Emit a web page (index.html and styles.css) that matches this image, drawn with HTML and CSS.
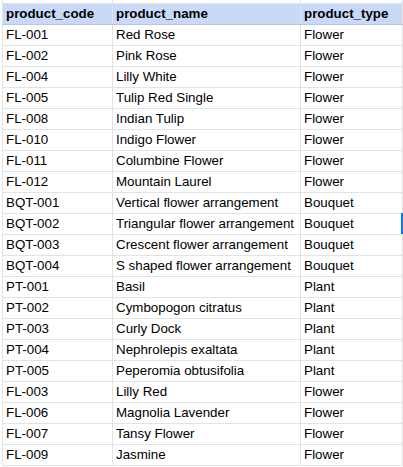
FILE: index.html
```html
<!DOCTYPE html>
<html>
<head>
<meta charset="utf-8">
<link rel="stylesheet" href="styles.css">
</head>
<body>
<div class="sheet">
<table class="grid">
<colgroup><col class="c1"><col class="c2"><col class="c3"><col class="c4"></colgroup>
<tr class="top"><td></td><td></td><td></td><td></td></tr>
<tr class="head"><td>product_code</td><td>product_name</td><td>product_type</td><td class="edge"></td></tr>
<tr><td>FL-001</td><td>Red Rose</td><td>Flower</td><td class="edge"></td></tr>
<tr><td>FL-002</td><td>Pink Rose</td><td>Flower</td><td class="edge"></td></tr>
<tr><td>FL-004</td><td>Lilly White</td><td>Flower</td><td class="edge"></td></tr>
<tr><td>FL-005</td><td>Tulip Red Single</td><td>Flower</td><td class="edge"></td></tr>
<tr><td>FL-008</td><td>Indian Tulip</td><td>Flower</td><td class="edge"></td></tr>
<tr><td>FL-010</td><td>Indigo Flower</td><td>Flower</td><td class="edge"></td></tr>
<tr><td>FL-011</td><td>Columbine Flower</td><td>Flower</td><td class="edge"></td></tr>
<tr><td>FL-012</td><td>Mountain Laurel</td><td>Flower</td><td class="edge"></td></tr>
<tr><td>BQT-001</td><td>Vertical flower arrangement</td><td>Bouquet</td><td class="edge"></td></tr>
<tr><td>BQT-002</td><td>Triangular flower arrangement</td><td>Bouquet</td><td class="edge"></td></tr>
<tr><td>BQT-003</td><td>Crescent flower arrangement</td><td>Bouquet</td><td class="edge"></td></tr>
<tr><td>BQT-004</td><td>S shaped flower arrangement</td><td>Bouquet</td><td class="edge"></td></tr>
<tr><td>PT-001</td><td>Basil</td><td>Plant</td><td class="edge"></td></tr>
<tr><td>PT-002</td><td>Cymbopogon citratus</td><td>Plant</td><td class="edge"></td></tr>
<tr><td>PT-003</td><td>Curly Dock</td><td>Plant</td><td class="edge"></td></tr>
<tr><td>PT-004</td><td>Nephrolepis exaltata</td><td>Plant</td><td class="edge"></td></tr>
<tr><td>PT-005</td><td>Peperomia obtusifolia</td><td>Plant</td><td class="edge"></td></tr>
<tr><td>FL-003</td><td>Lilly Red</td><td>Flower</td><td class="edge"></td></tr>
<tr><td>FL-006</td><td>Magnolia Lavender</td><td>Flower</td><td class="edge"></td></tr>
<tr><td>FL-007</td><td>Tansy Flower</td><td>Flower</td><td class="edge"></td></tr>
<tr><td>FL-009</td><td>Jasmine</td><td>Flower</td><td class="edge"></td></tr>
</table>
<div class="selection"></div>
</div>
</body>
</html>
```

FILE: styles.css
```css
html, body {
  margin: 0;
  padding: 0;
  background: #ffffff;
  overflow: hidden;
}
.sheet {
  padding-left: 2px;
  position: relative;
}
.grid {
  border-collapse: collapse;
  table-layout: fixed;
  width: 402px;
  font-family: "Liberation Sans", Arial, sans-serif;
  font-size: 13.33px;
  color: #000000;
}
.c1 { width: 110px; }
.c2 { width: 188px; }
.c3 { width: 102px; }
.c4 { width: 2px; }
.grid td {
  border: 1px solid #e2e3e3;
  height: 20px;
  padding: 0 0 0 3px;
  white-space: nowrap;
  overflow: hidden;
  line-height: 20px;
  vertical-align: middle;
  box-sizing: border-box;
}
.grid tr.top td {
  height: 3px;
  border-top: none;
  padding: 0;
  line-height: 0;
}
.grid tr.head td {
  background: #c9daf8;
  font-weight: bold;
  border-bottom-color: #b9c6de;
}
.grid tr.head td.edge {
  background: #ffffff;
}
.grid td.edge {
  padding: 0;
  border-right: none;
}
.selection {
  position: absolute;
  left: 401px;
  top: 213px;
  width: 2px;
  height: 21px;
  background: #1a73e8;
}
```
